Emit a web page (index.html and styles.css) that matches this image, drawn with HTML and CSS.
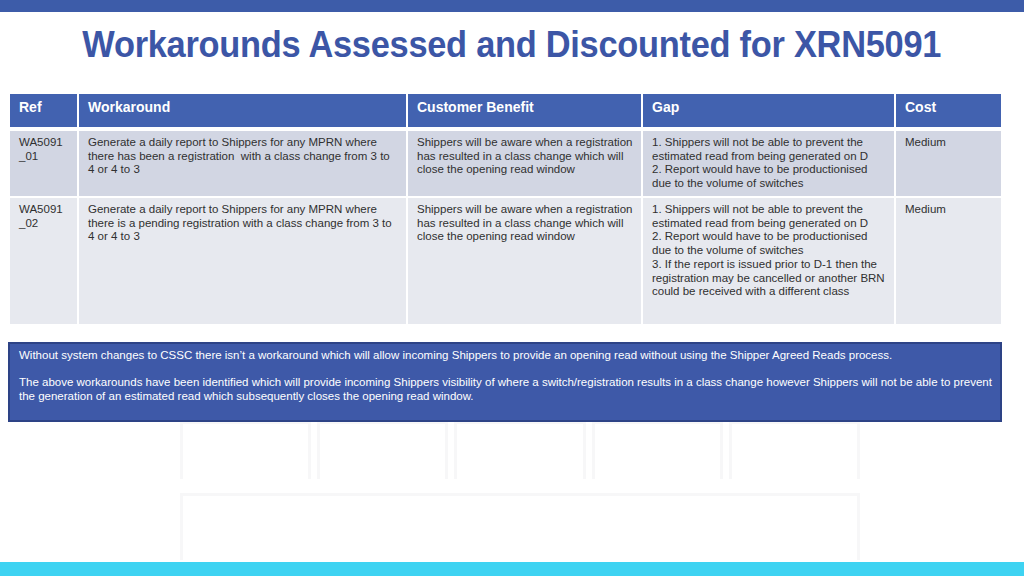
FILE: index.html
```html
<!DOCTYPE html>
<html>
<head>
<meta charset="utf-8">
<link rel="stylesheet" href="styles.css">
</head>
<body>
<div class="slide">
  <div class="topbar"></div>
  <div class="watermark">
    <div class="wm-row">
      <div class="wm-cell"></div><div class="wm-cell"></div><div class="wm-cell"></div><div class="wm-cell"></div><div class="wm-cell"></div>
    </div>
    <div class="wm-wide"></div>
  </div>
  <h1 class="title"><span class="title-text">Workarounds Assessed and Discounted for XRN5091</span></h1>
  <div class="table">
    <div class="th">Ref</div>
    <div class="th">Workaround</div>
    <div class="th">Customer Benefit</div>
    <div class="th">Gap</div>
    <div class="th">Cost</div>

    <div class="td r1">WA5091<br>_01</div>
    <div class="td r1">Generate a daily report to Shippers for any MPRN where there has been a registration&nbsp; with a class change from 3 to 4 or 4 to 3</div>
    <div class="td r1 cb">Shippers will be aware when a registration has resulted in a class change which will close the opening read window</div>
    <div class="td r1">1. Shippers will not be able to prevent the estimated read from being generated on D<br>2. Report would have to be productionised due to the volume of switches</div>
    <div class="td r1">Medium</div>

    <div class="td r2">WA5091<br>_02</div>
    <div class="td r2">Generate a daily report to Shippers for any MPRN where there is a pending registration with a class change from 3 to 4 or 4 to 3</div>
    <div class="td r2 cb">Shippers will be aware when a registration has resulted in a class change which will close the opening read window</div>
    <div class="td r2">1. Shippers will not be able to prevent the estimated read from being generated on D<br>2. Report would have to be productionised due to the volume of switches<br>3. If the report is issued prior to D-1 then the registration may be cancelled or another BRN could be received with a different class</div>
    <div class="td r2">Medium</div>
  </div>
  <div class="note">
    <p>Without system changes to CSSC there isn’t a workaround which will allow incoming Shippers to provide an opening read without using the Shipper Agreed Reads process.</p>
    <p>The above workarounds have been identified which will provide incoming Shippers visibility of where a switch/registration results in a class change however Shippers will not be able to prevent the generation of an estimated read which subsequently closes the opening read window.</p>
  </div>
  <div class="bottombar"></div>
</div>
</body>
</html>
```
FILE: styles.css
```css
html, body {
  margin: 0;
  padding: 0;
  background: #ffffff;
}
.slide {
  position: relative;
  width: 1024px;
  height: 576px;
  overflow: hidden;
  font-family: "Liberation Sans", Arial, sans-serif;
  display: flex;
  flex-direction: column;
}
.topbar {
  height: 12px;
  background: #3d5ca9;
  flex: none;
}
.watermark {
  position: absolute;
  left: 180px;
  top: 60px;
  width: 680px;
  height: 500px;
  display: flex;
  flex-direction: column;
  justify-content: flex-end;
  gap: 14px;
  z-index: 0;
}
.wm-row {
  display: flex;
  gap: 6px;
  height: 58px;
}
.wm-cell {
  flex: 1;
  border: 3px solid #f7f7f8;
  border-bottom: none;
}
.wm-wide {
  height: 64px;
  border: 3px solid #f7f7f8;
  border-bottom: none;
}
.title {
  position: relative;
  z-index: 1;
  margin: 0;
  height: 82px;
  display: flex;
  align-items: center;
  justify-content: center;
  padding-bottom: 16px;
  box-sizing: border-box;
  color: #3c56a6;
  font-size: 37px;
  font-weight: bold;
  letter-spacing: -0.3px;
  white-space: nowrap;
}
.title-text {
  display: inline-block;
  transform: scaleX(0.93);
}
.table {
  position: relative;
  z-index: 1;
  margin-left: 10px;
  display: grid;
  grid-template-columns: 67px 327px 233px 251px 105px;
  grid-template-rows: 37px 67px 126px;
  column-gap: 2px;
  width: 991px;
}
.th {
  background: #4262b0;
  color: #ffffff;
  font-weight: bold;
  font-size: 14px;
  padding: 5px 9px 0;
  margin-bottom: 4px;
  height: 33px;
  box-sizing: border-box;
}
.td {
  color: #303030;
  font-size: 11.5px;
  line-height: 13.7px;
  padding: 5px 9px 0 9px;
}
.td.cb {
  padding-right: 2px;
}
.r1 {
  background: #d2d6e3;
  margin-bottom: 2px;
}
.r2 {
  background: #e7e9ef;
}
.note {
  position: relative;
  z-index: 1;
  margin: 18px 0 0 8px;
  width: 994px;
  height: 80px;
  box-sizing: border-box;
  background: #3e59a8;
  border: 2px solid #2d4386;
  color: #ffffff;
  font-size: 11.5px;
  line-height: 13.7px;
  padding: 5px 3px 5px 9px;
}
.note p {
  margin: 0 0 13.7px 0;
}
.bottombar {
  margin-top: auto;
  height: 14px;
  background: #3ed3f2;
  flex: none;
  position: relative;
  z-index: 1;
}
```
